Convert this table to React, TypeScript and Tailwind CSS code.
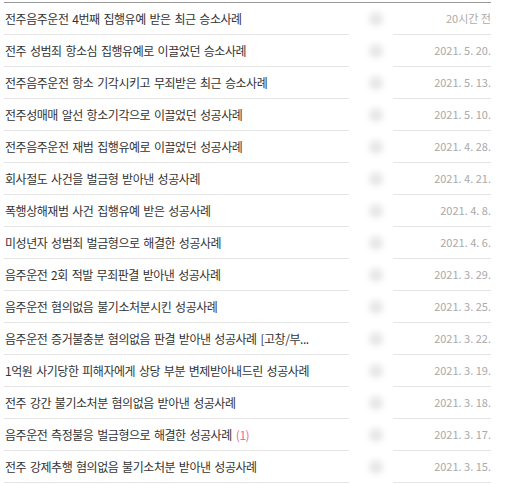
const posts: { title: string; date: string; comments?: number }[] = [
  { title: "전주음주운전 4번째 집행유예 받은 최근 승소사례", date: "20시간 전" },
  { title: "전주 성범죄 항소심 집행유예로 이끌었던 승소사례", date: "2021. 5. 20." },
  { title: "전주음주운전 항소 기각시키고 무죄받은 최근 승소사례", date: "2021. 5. 13." },
  { title: "전주성매매 알선 항소기각으로 이끌었던 성공사례", date: "2021. 5. 10." },
  { title: "전주음주운전 재범 집행유예로 이끌었던 성공사례", date: "2021. 4. 28." },
  { title: "회사절도 사건을 벌금형 받아낸 성공사례", date: "2021. 4. 21." },
  { title: "폭행상해재범 사건 집행유예 받은 성공사례", date: "2021. 4. 8." },
  { title: "미성년자 성범죄 벌금형으로 해결한 성공사례", date: "2021. 4. 6." },
  { title: "음주운전 2회 적발 무죄판결 받아낸 성공사례", date: "2021. 3. 29." },
  { title: "음주운전 혐의없음 불기소처분시킨 성공사례", date: "2021. 3. 25." },
  { title: "음주운전 증거불충분 혐의없음 판결 받아낸 성공사례 [고창/부...", date: "2021. 3. 22." },
  { title: "1억원 사기당한 피해자에게 상당 부분 변제받아내드린 성공사례", date: "2021. 3. 19." },
  { title: "전주 강간 불기소처분 혐의없음 받아낸 성공사례", date: "2021. 3. 18." },
  { title: "음주운전 측정불응 벌금형으로 해결한 성공사례", date: "2021. 3. 17.", comments: 1 },
  { title: "전주 강제추행 혐의없음 불기소처분 받아낸 성공사례", date: "2021. 3. 15." },
];

export default function App() {
  return (
    <div className="w-[505px] h-[484px] bg-white pt-[2px] pl-1 font-['Noto_Sans_CJK_KR',sans-serif]">
      <div className="w-[487px] border-t border-[#999]">
        {posts.map((p, i) => (
          <div key={i} className="flex h-8">
            <div className="flex-1 flex items-center pl-px border-b border-[#e5e5e5] text-[12px] tracking-[-0.45px] [word-spacing:1.5px] text-[#333] whitespace-nowrap overflow-hidden">
              <span>{p.title}</span>
              {p.comments ? <span className="ml-1 text-[#e8699b]">({p.comments})</span> : null}
            </div>
            <div className="w-[44px] flex items-center justify-end pr-[10px]">
              <div className="w-3.5 h-3.5 rounded-full bg-[#e6e6e6] blur-[3px]" />
            </div>
            <div className="w-[98px] flex items-center justify-end border-b border-[#e5e5e5] text-[11px] text-[#aaa] whitespace-nowrap">
              {p.date}
            </div>
          </div>
        ))}
      </div>
    </div>
  );
}
